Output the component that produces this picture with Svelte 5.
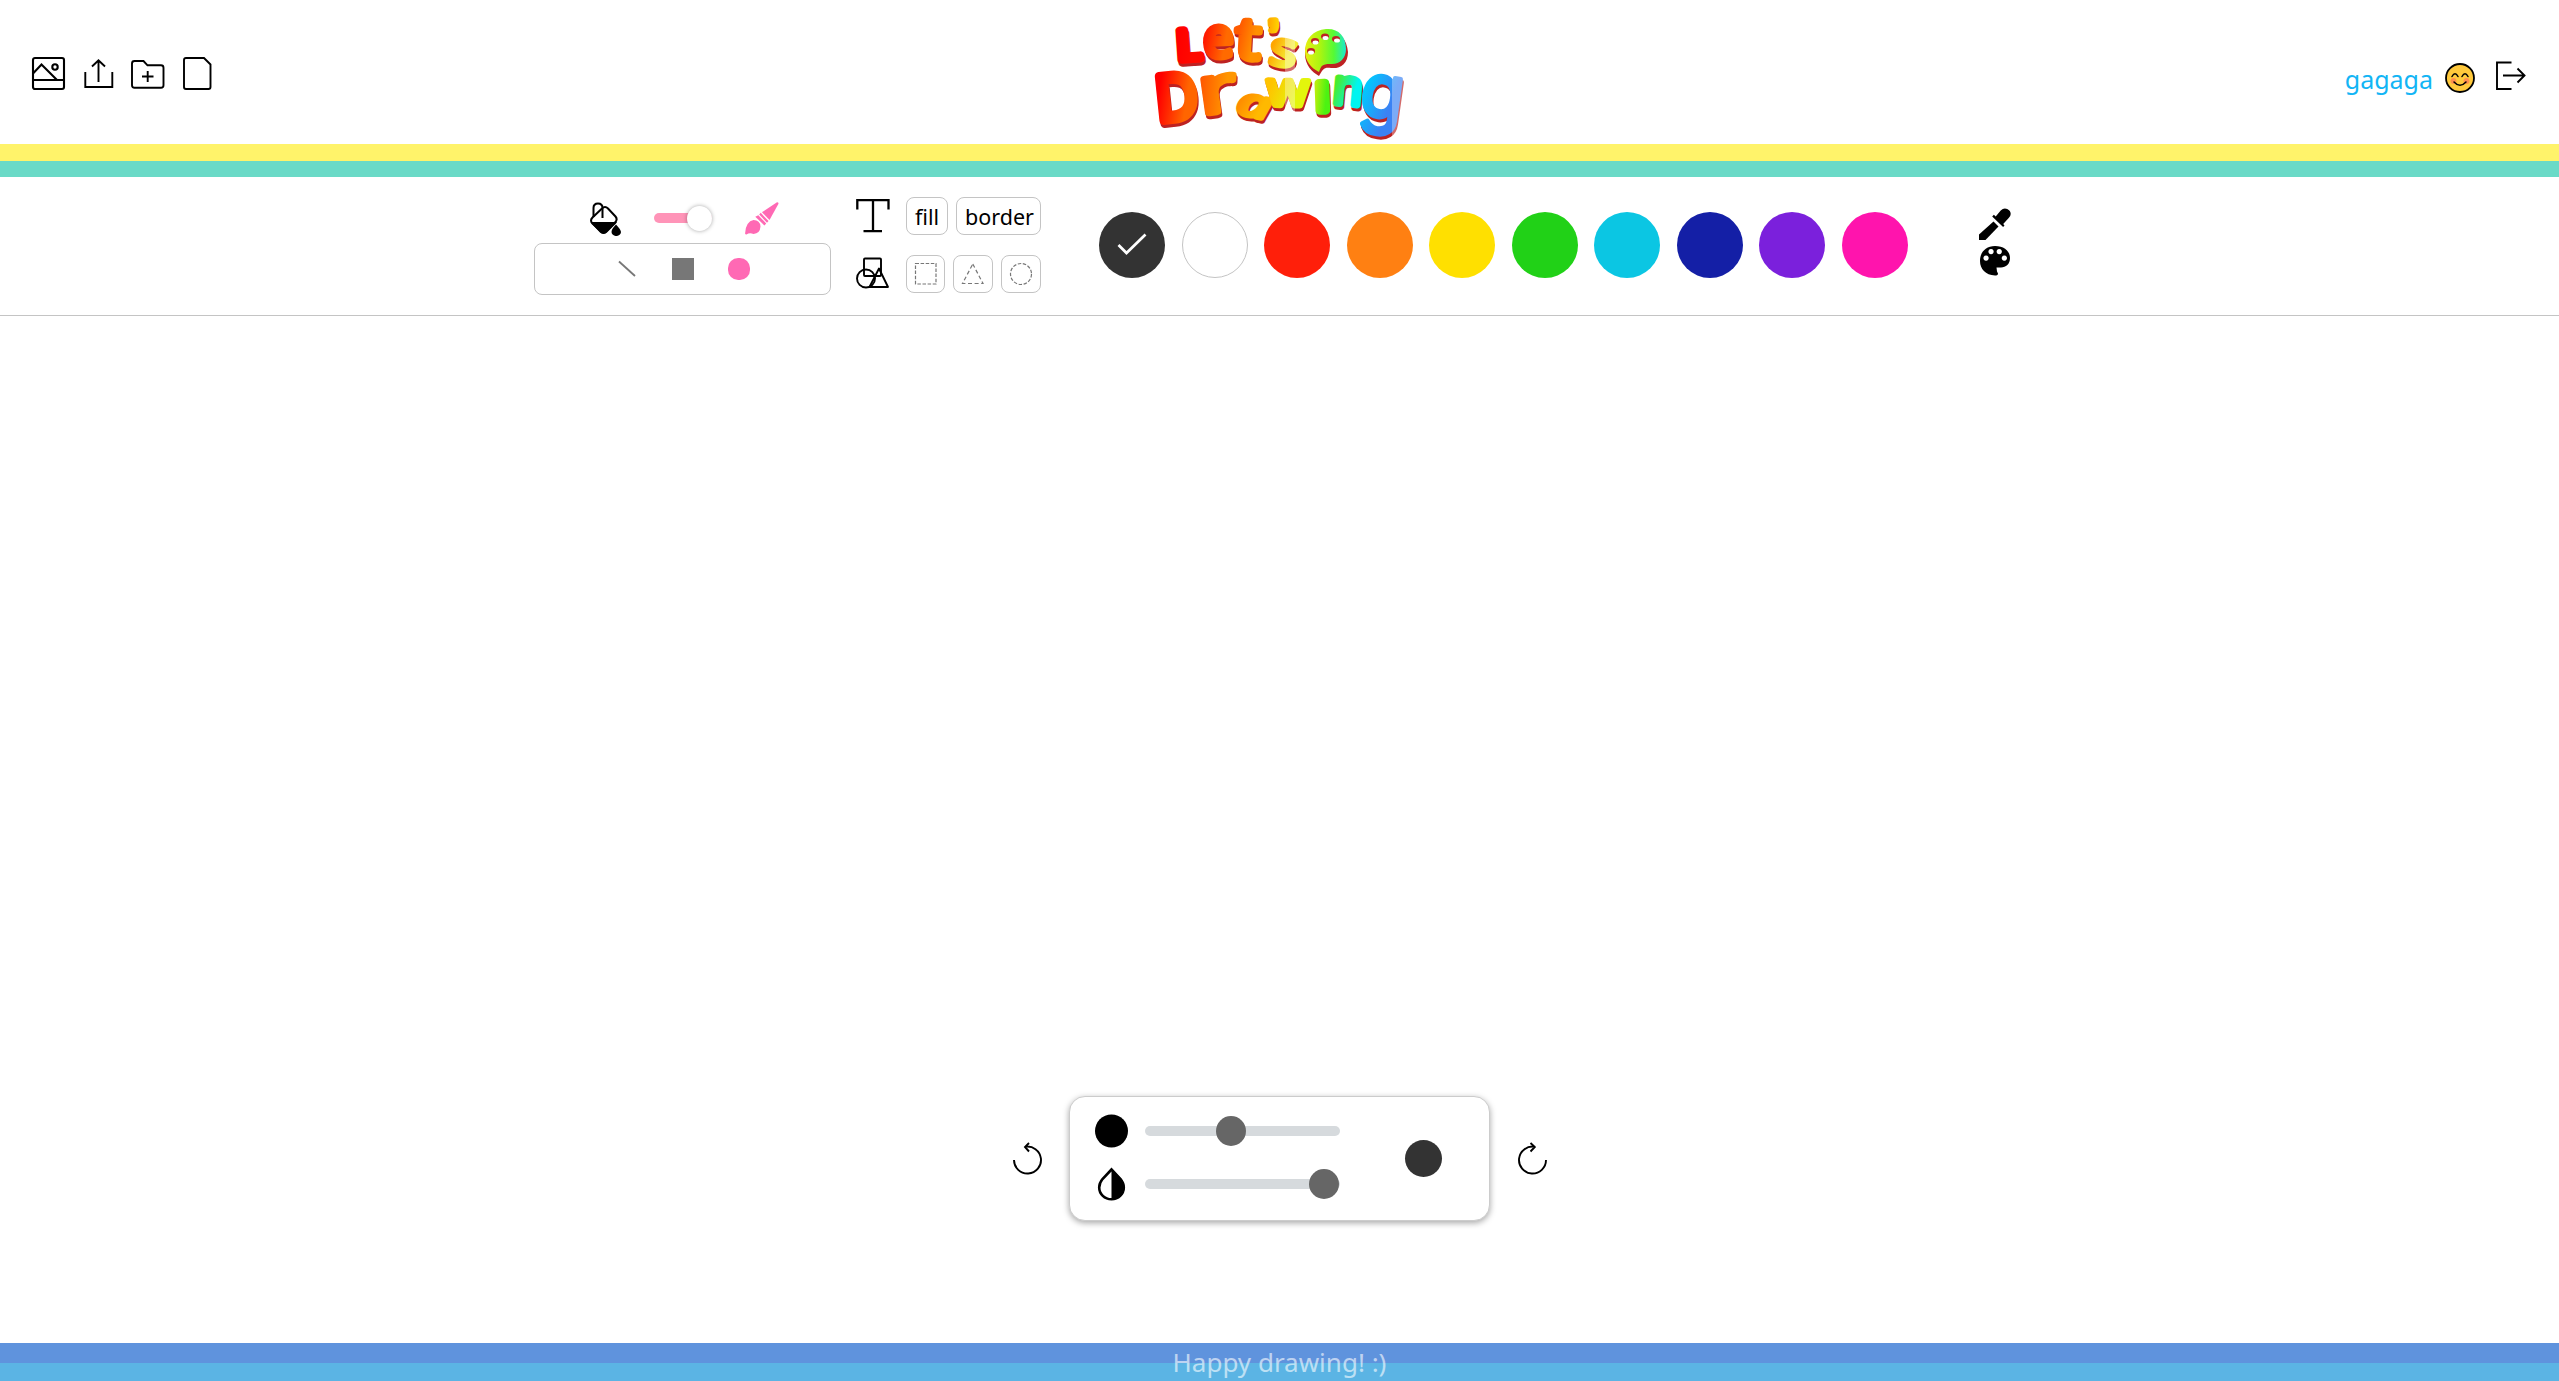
<script>
  const swatches = ['#333333', '#ffffff', '#ff1f0a', '#ff8012', '#ffe000', '#21d117', '#0bc6e3', '#141fa6', '#7b20dc', '#ff14ad'];
  let selected = $state(0);

  // Lettering of the logo: position, size, tilt, stretch, weight and the two tones of each letter
  const letters = [
    { ch: 'L', x: 37.5, y: 60, size: 41, rot: -4, sx: 1.12, sw: 8, from: '#ff0000', to: '#ff0a00' },
    { ch: 'e', x: 64, y: 57, size: 54, rot: -2, sx: 0.98, sw: 7, from: '#ff1a00', to: '#ff6a00' },
    { ch: 't', x: 95, y: 58, size: 57, rot: 3, sx: 1.2, sw: 6.5, from: '#ff5a00', to: '#ff9000' },
    { ch: '’', x: 130, y: 51, size: 44, rot: -4, sx: 1.1, sw: 6, font: 'Liberation Sans', from: '#ffae00', to: '#ffd000' },
    { ch: 's', x: 128, y: 63, size: 46, rot: 10, sx: 1.2, sw: 5.5, from: '#ffa600', to: '#f4ee35' },
    { ch: 'D', x: 18, y: 121, size: 62, rot: -6, sx: 0.92, sw: 9, from: '#ff0000', to: '#ff6500' },
    { ch: 'r', x: 62, y: 114, size: 64, rot: -8, sx: 1.4, sw: 6.5, from: '#ff5a00', to: '#ff9600' },
    { ch: 'a', x: 96, y: 113, size: 38, rot: 12, sx: 1.5, sw: 5, italic: true, from: '#ff8c00', to: '#ffb900' },
    { ch: 'w', x: 127, y: 105, size: 46, rot: 1, sx: 1.15, sw: 6, from: '#ffc400', to: '#e3f50c' },
    { ch: 'ı', x: 175, y: 111, size: 52, rot: -2, sx: 1.2, sw: 8, from: '#b8ee0c', to: '#4cf312' },
    { ch: 'n', x: 192, y: 103, size: 48, rot: 5, sx: 1.0, sw: 6.5, from: '#48ec2c', to: '#00f4f0' },
    { ch: 'g', x: 218, y: 115, size: 76, rot: 8, sx: 0.92, sw: 4.5, font: 'Inter', from: '#00c8ff', to: '#3b82f4' }
  ];
</script>

{#snippet lettering(shade)}
  {#each letters as l, i}
    <text
      transform="translate({l.x} {l.y}) rotate({l.rot}) scale({l.sx} 1)"
      font-size={l.size}
      font-family={l.font ?? 'Open Sans'}
      font-style={l.italic ? 'italic' : 'normal'}
      stroke-width={l.sw}
      fill={shade ? '#bd2222' : `url(#tone${i})`}
      stroke={shade ? '#bd2222' : `url(#tone${i})`}>{l.ch}</text>
  {/each}
{/snippet}

<div class="app">
  <header>
    <nav class="files">
      <svg width="33" height="33" viewBox="0 0 33 33" class="line">
        <rect x="1" y="1" width="31" height="31" rx="2" />
        <path d="M1 16.500 9.500 7.500 25 23M1 23h31" />
        <circle cx="23" cy="10" r="2.700" />
      </svg>
      <svg width="33" height="33" viewBox="0 0 33 33" class="line thin">
        <path d="M3.300 15v15h27V15M16.500 25V3.500M10 9.500l6.500-6.300L23 9.500" />
      </svg>
      <svg width="33" height="33" viewBox="0 0 33 33" class="line thin">
        <path d="M0 6.500q0-2.500 2.500-2.500h9l4 4.300h13.500q2.500 0 2.500 2.500v17.500q0 2.500-2.500 2.500H2.500q-2.500 0-2.500-2.500z" />
        <path d="M10 19.500h11.500M15.700 14v11" />
      </svg>
      <svg width="33" height="33" viewBox="0 0 33 33" class="line thin">
        <path d="M4 1h18l6.500 6.500V30q0 2-2 2H4q-2 0-2-2V3q0-2 2-2z" />
      </svg>
    </nav>

    <svg class="logo" width="279" height="144" viewBox="0 0 279 144" role="img" aria-label="Let's Drawing">
      <defs>
        {#each letters as l, i}
          <linearGradient id="tone{i}" x1="0" y1="0.15" x2="1" y2="0.7">
            <stop offset="0.2" stop-color={l.from} />
            <stop offset="0.75" stop-color={l.to} />
          </linearGradient>
        {/each}
        <linearGradient id="board">
          <stop offset="0" stop-color="#e8ef12" />
          <stop offset=".38" stop-color="#a8f511" />
          <stop offset=".7" stop-color="#55fa35" />
          <stop offset="1" stop-color="#1be8cf" />
        </linearGradient>
      </defs>
      <g transform="translate(1 3)">{@render lettering(true)}</g>
      {@render lettering(false)}
      <path class="gloss" d="M145 32h10v80h-10zM252 72h12v66h-12z" />
      <path fill="#bd2222" d="M187 31c12-1 20 8 21 21 0 12-8 17-17 16-7-1-8 1-12 8-7-4-14-11-14-22 0-13 9-22 22-23z" />
      <path fill="url(#board)" d="M186 29c12-1 20 7 20 20 0 10-7 16-16 15-8 0-9 2-11 8-8-4-14-11-14-21 0-12 8-21 21-22z" />
      <g fill="#bd2222">
        <ellipse cx="171" cy="51" rx="4" ry="3" /><ellipse cx="175" cy="41" rx="4" ry="3" />
        <ellipse cx="185" cy="36.500" rx="4" ry="3" /><ellipse cx="196" cy="39" rx="4" ry="3" />
      </g>
      <g fill="#fff">
        <ellipse cx="171" cy="52.500" rx="3" ry="2" /><ellipse cx="175.500" cy="42.500" rx="3" ry="2" />
        <ellipse cx="185.500" cy="38" rx="3" ry="2" /><ellipse cx="197" cy="40.500" rx="3" ry="2" />
      </g>
    </svg>

    <div class="account">
      <span class="name">gagaga</span>
      <svg class="face" width="30" height="30" viewBox="0 0 30 30">
        <circle cx="15" cy="15" r="14" fill="#ffc93c" stroke="#000" stroke-width="1.800" />
        <circle cx="8.500" cy="18" r="2.900" fill="#ff8f4f" /><circle cx="21.500" cy="18" r="2.900" fill="#ff8f4f" />
        <path d="M7 13.500q3-5.500 6 0M17 13.500q3-5.500 6 0M9 19q6 6.500 12 0" fill="none" stroke="#000" stroke-width="1.500" stroke-linecap="round" />
      </svg>
      <svg width="30" height="30" viewBox="0 0 30 30" class="line thin">
        <path d="M15.500 1.500H1v26.500h14.500M7 14.500h21M21.500 7.500l7 7-7 7" />
      </svg>
    </div>
  </header>
  <div class="stripe yellow"></div>
  <div class="stripe teal"></div>

  <section class="toolbar">
    <div class="brushes">
      <div class="modes">
        <svg width="32" height="34" viewBox="0 0 32 34">
          <path d="M3.500 15V6q0-4.500 4.500-4.500T12.500 6v10" fill="none" stroke="#000" stroke-width="2" />
          <path d="M12 6.500q3-3 6 0l7.500 8q2.500 3-.5 6l-8.500 8.500q-3 3-6 0L2.500 21.500q-3-3 0-6z" fill="none" stroke="#000" stroke-width="2" />
          <path d="M1 20h26q-.5 1-1.500 2L17 30.500q-3.500 3-7 0L2 22z" />
          <path d="M26 22.500l3 3.500q2 2.500 2 4a4.700 4 0 0 1-9.500 0q0-2 1.500-4z" />
        </svg>
        <span class="toggle"><i></i></span>
        <svg class="pink" width="34" height="33" viewBox="0 0 34 33">
          <path d="M32 .2q1.800-.2 1.500 1.500L24.500 18 17 10.200z" />
          <path d="M15.700 10.800 23.500 19 22 20.700 14.200 12.500zM13.300 13.200 21.200 21.500 19.500 23.500 10.300 14.800z" />
          <path d="M8.500 18q6.500 0 7 6.500-.5 7-7 7.500-4-1.500-7 .5-1.800 0-1.300-1.800Q1 19.500 8.500 18z" />
        </svg>
      </div>
      <div class="tips">
        <svg width="18" height="22" viewBox="0 0 18 22"><path d="M1 3.500 17 18" stroke="#777" stroke-width="1.800" fill="none" /></svg>
        <span class="square"></span>
        <span class="round"></span>
      </div>
    </div>

    <div class="shapes">
      <div class="tool-row">
        <svg width="34" height="38" viewBox="0 0 34 38"><path d="M1.300 12.500V3.200h31.200v9.300M17 3.200v31M7.500 34.200h18.500" fill="none" stroke="#000" stroke-width="2.300" /></svg>
        <button class="fill">fill</button>
        <button class="border">border</button>
      </div>
      <div class="tool-row">
        <svg width="34" height="38" viewBox="0 0 34 38">
          <g fill="none" stroke="#000" stroke-width="1.900">
            <rect x="8" y="3.500" width="17" height="17.500" rx="1" />
            <circle cx="10" cy="23.500" r="9" />
            <path d="M23 13.500 32 32H13.500z" stroke-linejoin="round" />
          </g>
        </svg>
        <button class="s39" aria-label="rectangle"><svg width="24" height="24" viewBox="0 0 24 24"><rect x="1.500" y="1.500" width="20.500" height="20.500" /></svg></button>
        <button class="s40" aria-label="triangle"><svg width="24" height="24" viewBox="0 0 24 24"><path d="M11.800 2 22 21.500H1.500z" /></svg></button>
        <button class="s40" aria-label="ellipse"><svg width="24" height="24" viewBox="0 0 24 24"><circle cx="12" cy="12" r="10.500" /></svg></button>
      </div>
    </div>

    <div class="palette">
      {#each swatches as colour, i}
        <button class="swatch" class:white={i === 1} style:background={colour} onclick={() => (selected = i)} aria-label={colour}>
          {#if selected === i}
            <svg width="30" height="24" viewBox="0 0 30 24"><path d="M1.500 12 9.500 20 28.500 1.500" fill="none" stroke="#fff" stroke-width="2.700" /></svg>
          {/if}
        </button>
      {/each}
    </div>

    <div class="pickers">
      <svg width="32" height="33" viewBox="0 0 32 33">
        <path d="M14.500 13.500 19.500 18.500 6.500 32H0v-5.500z" />
        <path d="M13.200 8.500l1.700-1.700 1.800 1.700 5-6q3-3 6.500-1.500 3.500 1.500 3.500 5 0 2-2 4l-5.500 6 1.300 1.500-1.400 1.400z" />
      </svg>
      <svg width="32" height="30" viewBox="0 0 32 30">
        <path fill-rule="evenodd" d="M16 0c9 0 15 5 15 12 0 6-4 9.500-9 9.500h-4.500l.5 4 1 2q0 2-3 2C6.500 29 1 23 1 15 1 6 7 0 16 0zM7 9.500a2.600 2.600 0 1 0 .1 0zM12 3a2.600 2.600 0 1 0 .1 0zM20.200 3a2.600 2.600 0 1 0 .1 0zM25.300 9.500a2.600 2.600 0 1 0 .1 0z" />
      </svg>
    </div>
  </section>

  <main>
    <div class="controls">
      <svg width="29" height="34" viewBox="0 0 29 34" class="line thin"><path d="M1 18a13.500 13.500 0 1 0 11-13.200M16 1l-4 4 4 4.500" /></svg>
      <div class="panel">
        <div class="sliders">
          <svg width="34" height="34" viewBox="0 0 34 34"><circle cx="16.500" cy="17" r="16.500" /></svg>
          <span class="track"><i style:left="71px"></i></span>
          <svg width="34" height="34" viewBox="0 0 34 34">
            <path d="M16.500 2.500 7.500 12q-3.300 4-3.300 8.500a12.300 11.800 0 0 0 24.600 0q0-4.500-3.300-8.500z" fill="#fff" stroke="#000" stroke-width="2.600" />
            <path d="M16.500 1.500 26 11.500q3.500 4 3.500 9A13 12.500 0 0 1 16.500 33z" />
          </svg>
          <span class="track"><i style:left="164px"></i></span>
        </div>
        <span class="preview"></span>
      </div>
      <svg width="29" height="34" viewBox="0 0 29 34" class="line thin"><path d="M28 18A13.500 13.500 0 1 1 17 4.800M12.500 1l4.300 4-4.300 4.500" /></svg>
    </div>
  </main>

  <footer><span>Happy drawing! :)</span></footer>
</div>

<style>
  :global(body) { background: #fff; }
  .app { height: 1381px; display: flex; flex-direction: column; font-family: 'Noto Sans', 'Open Sans', sans-serif; overflow: hidden; }
  svg { display: block; flex: none; }
  button { font: inherit; color: #000; box-sizing: border-box; padding: 0; border: 1px solid #c4c4c4; border-radius: 8px; background: #fff; display: flex; align-items: center; justify-content: center; flex: none; }
  .line { fill: none; stroke: #000; stroke-width: 2.1; overflow: visible; }
  .thin { stroke-width: 1.9; }

  header { height: 144px; display: grid; grid-template-columns: 1fr 279px 1fr; }
  .files { display: flex; gap: 17px; padding: 57px 0 0 32px; }
  .logo { overflow: visible; }
  .logo text { stroke-linejoin: round; }
  .gloss { fill: #fff; opacity: .33; }
  .account { display: flex; justify-content: flex-end; align-items: flex-start; padding: 61px 33px 0 0; }
  .name { color: #12b5f5; font-size: 25px; line-height: 34px; margin: 1px 12px 0 0; }
  .face { margin: 2px 21px 0 0; }

  .stripe { flex: none; }
  .yellow { height: 17px; background: #fff36a; }
  .teal { height: 16px; background: #6adac7; }

  .toolbar { flex: none; box-sizing: border-box; height: 139px; border-bottom: 1px solid #c4c4c4; display: flex; align-items: flex-start; padding-left: 534px; }
  .brushes { width: 297px; padding-top: 25px; }
  .modes { display: flex; height: 41px; padding-left: 56px; align-items: flex-start; }
  .toggle { width: 58px; height: 10px; margin: 11px 33px 0 32px; border-radius: 5px; background: #ff94b8; display: flex; align-items: center; justify-content: flex-end; }
  .toggle i { width: 25px; height: 25px; border-radius: 50%; background: #fff; box-shadow: 0 0 4px rgba(0, 0, 0, .35); flex: none; }
  .pink { fill: #ff69b4; }
  .tips { box-sizing: border-box; height: 52px; border: 1px solid #c4c4c4; border-radius: 8px; display: flex; align-items: center; padding-left: 83px; }
  .square { width: 22px; height: 22px; background: #777; margin: 0 34px 0 36px; }
  .round { width: 22px; height: 22px; background: #ff69b4; border-radius: 46%; }

  .shapes { width: 185px; margin-left: 25px; padding-top: 20px; display: grid; gap: 20px; }
  .tool-row { display: flex; height: 38px; }
  .tool-row button { height: 38px; font-size: 21.5px; line-height: 36px; }
  .tool-row .fill { width: 42px; margin-left: 16px; padding-top: 2px; }
  .tool-row .border { width: 85px; margin-left: 8px; padding: 2px 0 0 2px; }
  .s39 { width: 39px; margin-left: 16px; }
  .s40 { width: 40px; margin-left: 8px; }
  .tool-row button svg { fill: none; stroke: #777; stroke-width: 1.2; stroke-dasharray: 3.5 1.6; }
  .tool-row button path { stroke-dasharray: 4 2.6; }

  .palette { display: flex; gap: 16.55px; margin: 35px 0 0 58px; }
  .swatch { width: 66px; height: 66px; border: 0; border-radius: 50%; }
  .white { border: 1px solid #c4c4c4; }
  .pickers { display: grid; gap: 5px; margin: 31px 0 0 71px; }

  main { flex: 1; display: flex; align-items: flex-end; justify-content: center; padding-bottom: 122px; }
  .controls { display: flex; align-items: center; gap: 27.5px; }
  .panel { box-sizing: border-box; width: 421px; height: 125px; border: 1px solid #ccc; border-radius: 16px; background: #fff; box-shadow: 0 2px 6px rgba(0, 0, 0, .35); display: flex; align-items: center; padding-left: 25px; }
  .sliders { display: grid; grid-template-columns: 34px 195px; column-gap: 16px; row-gap: 19px; align-items: center; padding-bottom: 3px; }
  .track { position: relative; height: 10px; border-radius: 5px; background: #d6dadd; }
  .track i { position: absolute; top: -10px; width: 30px; height: 30px; border-radius: 50%; background: #666; }
  .preview { width: 37px; height: 37px; border-radius: 50%; background: #333; margin-left: 65px; }

  footer { flex: none; height: 38px; background: linear-gradient(#5f93dd 20px, #5bb4e4 20px); color: rgba(255, 255, 255, .6); font-size: 26px; line-height: 39px; text-align: center; }
</style>
